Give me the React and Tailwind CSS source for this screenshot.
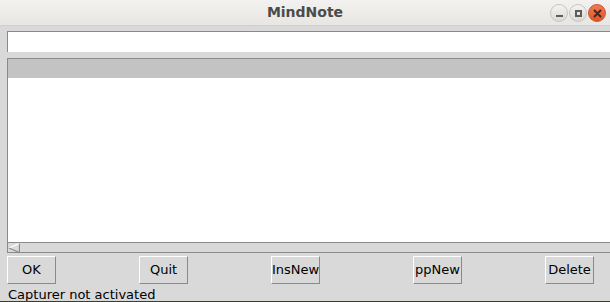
export default function App() {
  const buttons = [
    { label: 'OK', ml: 'ml-[7px]' },
    { label: 'Quit', ml: 'ml-[83px]' },
    { label: 'InsNew', ml: 'ml-[83px]' },
    { label: 'ppNew', ml: 'ml-[93px]' },
    { label: 'Delete', ml: 'ml-[83px]' },
  ]

  return (
    <div className="relative h-[302px] w-[610px] overflow-hidden bg-[#d9d9d9] font-['DejaVu_Sans',sans-serif] text-[13px] text-black">
      {/* title bar */}
      <div className="relative flex h-[26px] items-center justify-center border-b border-[#d2d0cc] bg-gradient-to-b from-[#f3f2f0] to-[#e8e6e2]">
        <span className="font-['DejaVu_Sans',sans-serif] text-[14px] font-bold text-[#4b4b4b]">MindNote</span>
        <div className="absolute right-[4px] top-[4px] flex gap-[1px]">
          <div className="flex h-[18px] w-[18px] items-center justify-center rounded-full border border-[#c9c6c1] bg-gradient-to-b from-[#f4f3f1] to-[#dcdad6]">
            <div className="mt-[5px] h-[2px] w-[7px] bg-[#5c5c5c]" />
          </div>
          <div className="flex h-[18px] w-[18px] items-center justify-center rounded-full border border-[#c9c6c1] bg-gradient-to-b from-[#f4f3f1] to-[#dcdad6]">
            <div className="h-[7px] w-[7px] border-2 border-[#5c5c5c]" />
          </div>
          <div className="flex h-[18px] w-[18px] items-center justify-center rounded-full border border-[#c8542c] bg-gradient-to-b from-[#f27a50] to-[#df5428]">
            <svg width="9" height="9" viewBox="0 0 9 9">
              <path d="M1.5 1.5 L7.5 7.5 M7.5 1.5 L1.5 7.5" stroke="#3c2a22" strokeWidth="2" strokeLinecap="round" />
            </svg>
          </div>
        </div>
      </div>

      {/* entry */}
      <div className="ml-[7px] mt-[5px] h-[21px] w-[620px] border-l border-t border-[#8a8a8a] bg-white" />

      {/* list */}
      <div className="ml-[7px] mt-[6px] w-[620px] border-l border-t border-[#8a8a8a] bg-white">
        <div className="h-[19px] bg-[#c3c3c3]" />
        <div className="h-[164px] bg-white" />
      </div>

      {/* scrollbar */}
      <div className="ml-[7px] flex h-[11px] w-[620px] border-b border-l border-t border-[#8a8a8a] bg-[#d9d9d9]">
        <div className="flex h-full w-[12px] items-center justify-center">
          <svg width="12" height="10" viewBox="0 0 12 10">
            <path d="M11.5 0.5 L0.8 5" fill="none" stroke="#ffffff" strokeWidth="1.2" />
            <path d="M0.8 5 L11.5 9.5 L11.5 0.5" fill="none" stroke="#8a8a8a" strokeWidth="1.2" />
          </svg>
        </div>
      </div>

      {/* buttons */}
      <div className="mt-[3px] flex h-[29px]">
        {buttons.map((b) => (
          <div
            key={b.label}
            className={`${b.ml} flex h-[28px] w-[49px] items-center justify-center border border-b-[#8a8a8a] border-l-white border-r-[#8a8a8a] border-t-white bg-[#d9d9d9] text-[13px]`}
          >
            {b.label}
          </div>
        ))}
      </div>

      {/* status */}
      <div className="ml-[8px] mt-[2px] leading-[16px]">Capturer not activated</div>

      {/* desktop behind the window */}
      <div className="absolute bottom-0 left-0 h-[1px] w-full bg-[#3a3d33]" />
    </div>
  )
}
